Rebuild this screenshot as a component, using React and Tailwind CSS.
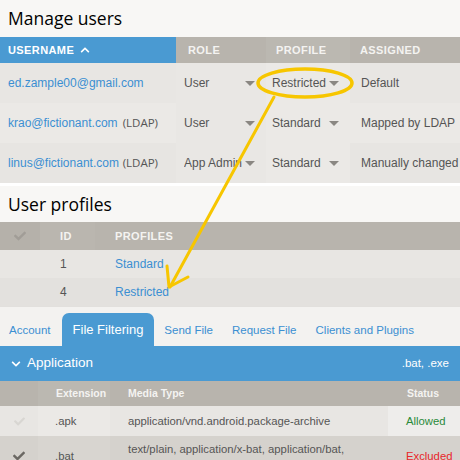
import React from 'react';
import { FaCheck, FaChevronDown, FaChevronUp } from 'react-icons/fa';

const sans = { fontFamily: '"Liberation Sans", Arial, sans-serif' };
const heading = { fontFamily: '"Open Sans", "Noto Sans", sans-serif' };

const Caret = () => (
  <svg width="10" height="5" viewBox="0 0 10 5" className="shrink-0">
    <path d="M0 0 L10 0 L5 5 Z" fill="#8a8782" />
  </svg>
);

const users = [
  { name: 'ed.zample00@gmail.com', ldap: false, role: 'User', profile: 'Restricted', assigned: 'Default', bg: 'bg-[#e8e6e3]' },
  { name: 'krao@fictionant.com', ldap: true, role: 'User', profile: 'Standard', assigned: 'Mapped by LDAP', bg: 'bg-[#ebe9e6]' },
  { name: 'linus@fictionant.com', ldap: true, role: 'App Admin', profile: 'Standard', assigned: 'Manually changed', bg: 'bg-[#e7e5e2]' },
];

const tabs = ['Account', 'File Filtering', 'Send File', 'Request File', 'Clients and Plugins'];

export default function App() {
  return (
    <div className="relative w-[460px] h-[460px] overflow-hidden bg-white" style={sans}>
      {/* Manage users */}
      <div className="bg-[#f8f7f5] h-[37px] flex items-center px-2">
        <h1 className="text-[17.5px] text-black" style={heading}>Manage users</h1>
      </div>
      <div className="flex h-[26px] text-[11px] font-bold tracking-[0.4px] text-[#f4f3f1]">
        <div className="w-[176px] shrink-0 bg-[#4a9ad2] flex items-center gap-1.5 px-2 text-white">
          USERNAME <FaChevronUp className="text-[10px]" />
        </div>
        <div className="w-[90px] shrink-0 bg-[#b8b4ad] flex items-center pl-[12px]">ROLE</div>
        <div className="w-[84px] shrink-0 bg-[#bbb8b1] flex items-center pl-[10px]">PROFILE</div>
        <div className="flex-1 bg-[#b8b4ad] flex items-center pl-[10px]">ASSIGNED</div>
      </div>
      {users.map((u) => (
        <div key={u.name} className={`flex h-[40px] text-[12px] whitespace-nowrap ${u.bg}`}>
          <div className="w-[176px] shrink-0 flex items-center px-2 text-[#3b8fd2]">
            <span>{u.name}</span>
            {u.ldap && <span className="ml-auto mr-[10px] text-[#555] text-[11.5px]" style={heading}>(LDAP)</span>}
          </div>
          <div className="w-[90px] shrink-0 flex items-center pl-[8px] pr-[11px] text-[#555] bg-[#e9e7e4]">
            <span className="flex-1 overflow-hidden">{u.role}</span>
            <Caret />
          </div>
          <div className="w-[84px] shrink-0 flex items-center pl-[6px] pr-[11px] text-[#555] bg-[#ebe9e6]">
            <span className="flex-1">{u.profile}</span>
            <Caret />
          </div>
          <div className="flex-1 min-w-0 overflow-hidden flex items-center pl-[11px] text-[#555]">{u.assigned}</div>
        </div>
      ))}
      <div className="h-[3px] bg-white" />

      {/* User profiles */}
      <div className="bg-[#f8f7f5] h-[36px] flex items-center px-2">
        <h2 className="text-[17.5px] text-black" style={heading}>User profiles</h2>
      </div>
      <div className="flex h-[28px] text-[11px] font-bold tracking-[0.4px] text-[#f4f3f1] bg-[#b8b4ad]">
        <div className="w-[40px] flex items-center justify-center bg-[#b5b1aa]">
          <FaCheck className="text-[#a19d97] text-[12px]" />
        </div>
        <div className="w-[55px] flex items-center pl-[20px] bg-[#bab6af]">ID</div>
        <div className="flex-1 flex items-center pl-[20px]">PROFILES</div>
      </div>
      {[['1', 'Standard', 'bg-[#e8e6e3]'], ['4', 'Restricted', 'bg-[#e3e1de]']].map(([id, name, bg]) => (
        <div key={id} className={`flex h-[28px] text-[12px] ${bg}`}>
          <div className="w-[40px]" />
          <div className="w-[55px] flex items-center pl-[20px] text-[#555]">{id}</div>
          <div className="flex-1 flex items-center pl-[20px] text-[#3b8fd2]">{name}</div>
        </div>
      ))}

      {/* Tabs */}
      <div className="h-[40px] bg-[#f3f2f0] border-t border-[#e2e0dd] flex items-end pl-[9px] text-[11.5px] text-[#3b8fd2] whitespace-nowrap">
        {tabs.map((t, i) =>
          t === 'File Filtering' ? (
            <div key={t} className="h-[33px] bg-[#4a9ad2] rounded-t-[7px] px-[11px] flex items-center text-white text-[13px] mr-[10px]">
              {t}
            </div>
          ) : (
            <div key={t} className={`h-[33px] flex items-center pt-[2px] ${i === 0 ? 'mr-[11px]' : 'mr-[19px]'}`}>{t}</div>
          )
        )}
      </div>
      <div className="h-[35px] bg-[#4a9ad2] flex items-center pl-[11px] pr-[11px] text-white">
        <FaChevronDown className="text-[10px] mr-[6px]" />
        <span className="text-[13.5px]">Application</span>
        <span className="ml-auto text-[11.5px]">.bat, .exe</span>
      </div>
      <div className="flex h-[25px] text-[10.5px] font-bold text-[#f4f3f1] bg-[#b8b4ad]">
        <div className="w-[38px]" />
        <div className="w-[72px] flex items-center pl-[18px] bg-[#bbb8b1]">Extension</div>
        <div className="flex-1 flex items-center pl-[18px]">Media Type</div>
        <div className="w-[72px] flex items-center pl-[19px]">Status</div>
      </div>
      <div className="flex h-[30px] text-[11.3px] text-[#555] bg-[#e8e6e3]">
        <div className="w-[38px] flex items-center justify-center">
          <FaCheck className="text-[#d8d6d2] text-[11px]" />
        </div>
        <div className="w-[72px] flex items-center pl-[17px] bg-[#ebe9e6]">.apk</div>
        <div className="flex-1 flex items-center pl-[18px]">application/vnd.android.package-archive</div>
        <div className="w-[72px] flex items-center pl-[18px] bg-[#eeedeb] text-[#2a8a3a]">Allowed</div>
      </div>
      <div className="flex h-[40px] text-[11.3px] text-[#555] bg-[#d5d2cd]">
        <div className="w-[38px] flex items-center justify-center">
          <FaCheck className="text-[#6b6863] text-[12px]" />
        </div>
        <div className="w-[72px] flex items-center pl-[17px] bg-[#d8d5d0]">.bat</div>
        <div className="flex-1 pl-[18px] pt-[6px] leading-[15px]">text/plain, application/x-bat, application/bat, application/x-msdos-program</div>
        <div className="w-[72px] flex items-center pl-[18px] text-[#e8262a]">Excluded</div>
      </div>

      {/* annotation */}
      <svg className="absolute left-0 top-0 pointer-events-none" width="460" height="460">
        <ellipse cx="305" cy="83" rx="47" ry="14" fill="none" stroke="#f7c600" strokeWidth="3.5" />
        <path d="M274 97 L170 287" stroke="#f7c600" strokeWidth="3" fill="none" strokeLinecap="round" />
        <path d="M167 266 L169 287 L188 277" stroke="#f7c600" strokeWidth="3" fill="none" strokeLinecap="round" strokeLinejoin="round" />
      </svg>
    </div>
  );
}
